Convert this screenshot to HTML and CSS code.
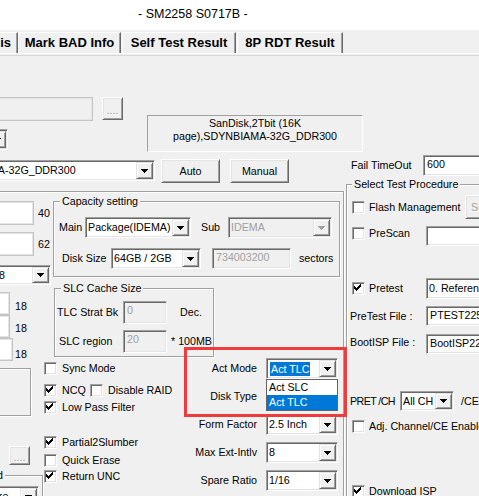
FILE: index.html
```html
<!DOCTYPE html>
<html lang="en">
<head>
<meta charset="utf-8">
<title>SM2258 S0717B</title>
<link rel="stylesheet" href="styles.css">
</head>
<body>
<div class="titlebar">- SM2258 S0717B -</div>
<div class="tabs">
  <div class="tab t1">is</div>
  <div class="tab t2">Mark BAD Info</div>
  <div class="tab t3">Self Test Result</div>
  <div class="tab t4">8P RDT Result</div>
</div>
<div class="panel">
  <div class="top">
    <div class="tl">
      <div class="row">
        <div class="edit lite dis e-path"></div>
        <div class="btn dis b-path">....</div>
      </div>
      <div class="combo c-stub"><span class="val"></span><span class="arr"><svg width="7" height="4" viewBox="0 0 7 4"><path d="M0 0h7v1h-1v1h-1v1h-1v1h-1v-1h-1v-1h-1v-1h-1z"/></svg></span></div>
    </div>
    <div class="info">SanDisk,2Tbit (16K<br>page),SDYNBIAMA-32G_DDR300</div>
  </div>
  <div class="row r3">
    <div class="combo c-chip"><span class="val">SDYNBIAMA-32G_DDR300</span><span class="arr"><svg width="7" height="4" viewBox="0 0 7 4"><path d="M0 0h7v1h-1v1h-1v1h-1v1h-1v-1h-1v-1h-1v-1h-1z"/></svg></span></div>
    <div class="btn b-auto">Auto</div>
    <div class="btn b-man">Manual</div>
    <div class="lbl l-fail">Fail TimeOut</div>
    <div class="edit e-fail">600</div>
  </div>
  <div class="bottom">
    <div class="biggroup">
      <div class="colL">
        <div class="row l-r1"><div class="edit lite e-40"></div><div class="lbl l-40">40</div></div>
        <div class="row l-r2"><div class="edit lite e-40"></div><div class="lbl l-40">62</div></div>
        <div class="combo c-8"><span class="val">8</span><span class="arr"><svg width="7" height="4" viewBox="0 0 7 4"><path d="M0 0h7v1h-1v1h-1v1h-1v1h-1v-1h-1v-1h-1v-1h-1z"/></svg></span></div>
        <div class="row l-r3"><div class="edit lite e-18"></div><div class="lbl l-18a">18</div></div>
        <div class="row"><div class="edit lite e-18"></div><div class="lbl l-18b">18</div></div>
        <div class="row"><div class="edit lite e-18w"></div><div class="lbl l-18c">18</div></div>
        <div class="grp f-box"></div>
        <div class="btn dis b-dots">....</div>
        <div class="grp g-low">
          <div class="gt gt-low">Speed</div>
          <div class="combo c-hw"><span class="val">Hardware</span><span class="arr"><svg width="7" height="4" viewBox="0 0 7 4"><path d="M0 0h7v1h-1v1h-1v1h-1v1h-1v-1h-1v-1h-1v-1h-1z"/></svg></span></div>
        </div>
      </div>
      <div class="colM">
        <div class="grp g-cap">
          <div class="gt">Capacity setting</div>
          <div class="row crow cap1">
            <div class="lbl l-main">Main</div>
            <div class="combo c-main"><span class="val">Package(IDEMA)</span><span class="arr"><svg width="7" height="4" viewBox="0 0 7 4"><path d="M0 0h7v1h-1v1h-1v1h-1v1h-1v-1h-1v-1h-1v-1h-1z"/></svg></span></div>
            <div class="lbl l-sub">Sub</div>
            <div class="combo dis c-sub"><span class="val">IDEMA</span><span class="arr"><svg width="7" height="4" viewBox="0 0 7 4"><path d="M0 0h7v1h-1v1h-1v1h-1v1h-1v-1h-1v-1h-1v-1h-1z"/></svg></span></div>
          </div>
          <div class="row crow cap2">
            <div class="lbl l-disk">Disk Size</div>
            <div class="combo c-disk"><span class="val">64GB / 2GB</span><span class="arr"><svg width="7" height="4" viewBox="0 0 7 4"><path d="M0 0h7v1h-1v1h-1v1h-1v1h-1v-1h-1v-1h-1v-1h-1z"/></svg></span></div>
            <div class="edit dis e-sect">734003200</div>
            <div class="lbl l-sect">sectors</div>
          </div>
        </div>
        <div class="grp g-slc">
          <div class="gt">SLC Cache Size</div>
          <div class="row srow slc1">
            <div class="lbl l-tlc">TLC Strat Bk</div>
            <div class="edit dis e-slc">0</div>
            <div class="lbl l-dec">Dec.</div>
          </div>
          <div class="row srow slc2">
            <div class="lbl l-slcr">SLC region</div>
            <div class="edit dis e-slc">20</div>
            <div class="lbl l-mb">* 100MB</div>
          </div>
        </div>
        <div class="lower">
          <div class="checks">
            <div class="chk k-sync"><span class="box"></span><span class="cap">Sync Mode</span></div>
            <div class="krow">
              <div class="chk k-ncq"><span class="box"><svg width="11" height="11" viewBox="0 0 11 11"><path d="M1 3h1v3H1zM2 4h1v3H2zM3 5h1v3H3zM4 4h1v3H4zM5 3h1v3H5zM6 2h1v3H6zM7 1h1v3H7z"/></svg></span><span class="cap">NCQ</span></div>
              <div class="chk"><span class="box"></span><span class="cap">Disable RAID</span></div>
            </div>
            <div class="chk k-lpf"><span class="box"><svg width="11" height="11" viewBox="0 0 11 11"><path d="M1 3h1v3H1zM2 4h1v3H2zM3 5h1v3H3zM4 4h1v3H4zM5 3h1v3H5zM6 2h1v3H6zM7 1h1v3H7z"/></svg></span><span class="cap">Low Pass Filter</span></div>
            <div class="chk k-p2s"><span class="box"><svg width="11" height="11" viewBox="0 0 11 11"><path d="M1 3h1v3H1zM2 4h1v3H2zM3 5h1v3H3zM4 4h1v3H4zM5 3h1v3H5zM6 2h1v3H6zM7 1h1v3H7z"/></svg></span><span class="cap">Partial2Slumber</span></div>
            <div class="chk k-qe"><span class="box"></span><span class="cap">Quick Erase</span></div>
            <div class="chk k-unc"><span class="box"><svg width="11" height="11" viewBox="0 0 11 11"><path d="M1 3h1v3H1zM2 4h1v3H2zM3 5h1v3H3zM4 4h1v3H4zM5 3h1v3H5zM6 2h1v3H6zM7 1h1v3H7z"/></svg></span><span class="cap">Return UNC</span></div>
          </div>
          <div class="acts">
            <div class="albl">Act Mode</div>
            <div class="combo"><span class="val"><span class="hl">Act TLC</span></span><span class="arr"><svg width="7" height="4" viewBox="0 0 7 4"><path d="M0 0h7v1h-1v1h-1v1h-1v1h-1v-1h-1v-1h-1v-1h-1z"/></svg></span></div>
            <div class="albl">Disk Type</div>
            <div class="combo"><span class="val"></span><span class="arr"><svg width="7" height="4" viewBox="0 0 7 4"><path d="M0 0h7v1h-1v1h-1v1h-1v1h-1v-1h-1v-1h-1v-1h-1z"/></svg></span></div>
            <div class="albl">Form Factor</div>
            <div class="combo"><span class="val">2.5 Inch</span><span class="arr"><svg width="7" height="4" viewBox="0 0 7 4"><path d="M0 0h7v1h-1v1h-1v1h-1v1h-1v-1h-1v-1h-1v-1h-1z"/></svg></span></div>
            <div class="albl">Max Ext-Intlv</div>
            <div class="combo"><span class="val">8</span><span class="arr"><svg width="7" height="4" viewBox="0 0 7 4"><path d="M0 0h7v1h-1v1h-1v1h-1v1h-1v-1h-1v-1h-1v-1h-1z"/></svg></span></div>
            <div class="albl">Spare Ratio</div>
            <div class="combo"><span class="val">1/16</span><span class="arr"><svg width="7" height="4" viewBox="0 0 7 4"><path d="M0 0h7v1h-1v1h-1v1h-1v1h-1v-1h-1v-1h-1v-1h-1z"/></svg></span></div>
          </div>
        </div>
      </div>
    </div>
    <div class="grp selgroup">
      <div class="gt gt-sel">Select Test Procedure</div>
      <div class="srow2 s-flash">
        <div class="chk"><span class="box"></span><span class="cap cap-w96">Flash Management</span></div>
        <div class="btn dis b-set">Setup</div>
      </div>
      <div class="srow2 s-scan">
        <div class="chk k-scan"><span class="box"></span><span class="cap cap-w57">PreScan</span></div>
        <div class="edit e-side"></div>
      </div>
      <div class="srow2 s-pt">
        <div class="chk"><span class="box"><svg width="11" height="11" viewBox="0 0 11 11"><path d="M1 3h1v3H1zM2 4h1v3H2zM3 5h1v3H3zM4 4h1v3H4zM5 3h1v3H5zM6 2h1v3H6zM7 1h1v3H7z"/></svg></span><span class="cap cap-w57">Pretest</span></div>
        <div class="combo c-ref"><span class="val">0. Reference Test</span><span class="arr"><svg width="7" height="4" viewBox="0 0 7 4"><path d="M0 0h7v1h-1v1h-1v1h-1v1h-1v-1h-1v-1h-1v-1h-1z"/></svg></span></div>
      </div>
      <div class="srow2 s-ptf">
        <div class="lbl l-file">PreTest File :</div>
        <div class="edit e-side">PTEST2258.bin</div>
      </div>
      <div class="srow2 s-boot">
        <div class="lbl l-file l-up">BootISP File :</div>
        <div class="edit e-side">BootISP2258.bin</div>
      </div>
      <div class="srow2 s-pret">
        <div class="lbl l-pret">PRET /CH</div>
        <div class="combo c-allch"><span class="val">All CH</span><span class="arr"><svg width="7" height="4" viewBox="0 0 7 4"><path d="M0 0h7v1h-1v1h-1v1h-1v1h-1v-1h-1v-1h-1v-1h-1z"/></svg></span></div>
        <div class="lbl l-ce">/CE</div>
      </div>
      <div class="chk s-adj"><span class="box"></span><span class="cap">Adj. Channel/CE Enable</span></div>
      <div class="chk s-dl"><span class="box"><svg width="11" height="11" viewBox="0 0 11 11"><path d="M1 3h1v3H1zM2 4h1v3H2zM3 5h1v3H3zM4 4h1v3H4zM5 3h1v3H5zM6 2h1v3H6zM7 1h1v3H7z"/></svg></span><span class="cap">Download ISP</span></div>
    </div>
  </div>
</div>
<div class="redbox"></div>
<div class="droplist"><div class="opt">Act SLC</div><div class="opt sel">Act TLC</div></div>
</body>
</html>
```
FILE: styles.css
```css
* { box-sizing: border-box; }
html, body { margin: 0; padding: 0; overflow: hidden; }
body {
  position: relative;
  width: 479px;
  height: 496px;
  background: #f0f0f0;
  color: #000;
  font-family: "Liberation Sans", Arial, sans-serif;
  font-size: 10.7px;
  line-height: 13px;
}

/* title bar */
.titlebar {
  height: 30px;
  background: #fff;
  padding: 7px 0 0 138px;
  font-size: 12.5px;
  line-height: 14px;
  white-space: nowrap;
}

/* tabs */
.tabs { display: flex; height: 23px; padding-top: 2px; }
.tab {
  flex-shrink: 0;
  height: 21px;
  border-top: 1px solid #fff;
  border-left: 1px solid #fff;
  border-right: 1px solid #696969;
  box-shadow: inset -1px 0 #a0a0a0;
  font-weight: bold;
  font-size: 13px;
  line-height: 20px;
  text-align: center;
  white-space: nowrap;
}
.t1 { width: 18px; border-left: 0; text-align: right; padding-right: 6px; }
.t2 { width: 103px; margin-right: 1px; }
.t3 { width: 114px; margin-right: 1px; }
.t4 { width: 106px; }

.panel { border-top: 1px solid #fff; }
.panel::before { content: ""; display: block; height: 1px; margin-top: 1px; background: #d8d8d8; }

/* generic controls */
.row { display: flex; align-items: flex-start; }
.lbl { flex-shrink: 0; white-space: nowrap; }

.edit {
  flex-shrink: 0;
  display: flex;
  align-items: flex-start;
  padding: 2px 3px 0;
  background: #fff;
  border: 1px solid;
  border-color: #a0a0a0 #fff #fff #a0a0a0;
  box-shadow: inset 1px 1px #696969, inset -1px -1px #e3e3e3;
  white-space: nowrap;
  overflow: hidden;
}
.edit.dis { background: #f0f0f0; color: #a0a0a0; }
.edit.lite { border-color: #c4c4c4; box-shadow: inset 0 0 0 1px #e4e4e4; }

.combo {
  flex-shrink: 0;
  display: flex;
  align-items: center;
  height: 21px;
  padding: 1px;
  background: #fff;
  border: 1px solid;
  border-color: #a0a0a0 #fff #fff #a0a0a0;
  box-shadow: inset 1px 1px #696969, inset -1px -1px #e3e3e3;
}
.combo .val { flex: 1; min-width: 0; padding-left: 1px; white-space: nowrap; overflow: hidden; }
.combo .arr {
  flex-shrink: 0;
  width: 17px;
  align-self: stretch;
  display: flex;
  align-items: center;
  justify-content: center;
  background: #f0f0f0;
  border: 1px solid;
  border-color: #e3e3e3 #696969 #696969 #e3e3e3;
  box-shadow: inset 1px 1px #fff, inset -1px -1px #a0a0a0;
}
.arr svg { display: block; fill: #000; }
.combo.dis { background: #f0f0f0; color: #a0a0a0; }
.combo.dis .arr svg { fill: #a0a0a0; }
.hl { display: inline-block; margin-left: 1px; padding: 0 1px; line-height: 14px; background: #0078d7; color: #fff; }

.btn {
  flex-shrink: 0;
  display: flex;
  align-items: center;
  justify-content: center;
  background: #f0f0f0;
  border: 1px solid;
  border-color: #fff #696969 #696969 #fff;
  box-shadow: inset 1px 1px #e3e3e3, inset -1px -1px #a0a0a0;
  white-space: nowrap;
  overflow: hidden;
}
.btn.dis { color: #a0a0a0; text-shadow: 1px 1px #fff; }

.chk { flex-shrink: 0; display: flex; align-items: center; height: 13px; white-space: nowrap; }
.box {
  flex-shrink: 0;
  width: 13px;
  height: 13px;
  background: #fff;
  border: 1px solid;
  border-color: #a0a0a0 #fff #fff #a0a0a0;
  box-shadow: inset 1px 1px #696969, inset -1px -1px #e3e3e3;
}
.box svg { display: block; fill: #000; }
.chk .cap { margin-left: 5px; }

.grp { flex-shrink: 0; border: 1px solid #a0a0a0; box-shadow: inset 1px 1px #fff, 1px 1px #fff; }
.gt { width: max-content; margin: -7px 0 0 6px; padding: 0 2px; background: #f0f0f0; white-space: nowrap; }

/* top area */
.top { display: flex; height: 96px; }
.tl { flex-shrink: 0; width: 147px; padding-top: 41px; }
.e-path { width: 103px; height: 24px; margin-left: -10px; }
.b-path { width: 21px; height: 23px; margin-left: 9px; padding-top: 3px; }
.c-stub { width: 68px; margin: 8px 0 0 -60px; }
.info {
  flex-shrink: 0;
  width: 216px;
  height: 37px;
  margin-top: 59px;
  padding-top: 1px;
  border: 1px solid;
  border-color: #a0a0a0 #fff #fff #a0a0a0;
  text-align: center;
  white-space: nowrap;
}

.r3 { height: 32px; }
.c-chip { width: 216px; margin: 8px 0 0 -61px; }
.b-auto { width: 59px; height: 24px; margin: 7px 0 0 6px; }
.b-man { width: 59px; height: 24px; margin: 7px 0 0 10px; }
.l-fail { width: 72px; margin: 7px 0 0 62px; }
.e-fail { width: 60px; height: 21px; margin-top: 3px; }

/* bottom area */
.bottom { display: flex; align-items: flex-start; }
.biggroup {
  flex-shrink: 0;
  display: flex;
  width: 344px;
  height: 310px;
  margin-top: 7px;
  border: 1px solid #a0a0a0;
  border-left: 0;
  border-bottom: 0;
  box-shadow: inset 0 1px #fff, 1px 0 #fff;
}
.colL { flex-shrink: 0; width: 43px; }
.colM { flex-shrink: 0; width: 300px; }

.l-r1 { margin-top: 9px; }
.l-r2 { margin-top: 7px; }
.e-40 { width: 44px; height: 24px; margin-left: -10px; }
.l-40 { margin: 6px 0 0 4px; }
.c-8 { width: 55px; height: 20px; margin: 9px 0 0 -4px; }
.l-r3 { margin-top: 7px; }
.e-18 { width: 20px; height: 23px; margin-left: -10px; }
.e-18w { width: 23px; height: 23px; margin-left: -10px; }
.l-18a { margin: 8px 0 0 5px; }
.l-18b { margin: 7px 0 0 5px; }
.l-18c { margin: 10px 0 0 2px; }
.f-box { width: 41px; height: 48px; margin: 7px 0 0 -10px; }
.b-dots { width: 21px; height: 19px; margin: 30px 0 0 9px; padding-top: 3px; }
.g-low { width: 83px; height: 60px; margin: 10px 0 0 -40px; }
.gt-low { width: 40px; margin-left: 4px; text-align: right; }
.c-hw { width: 80px; margin: 4px 0 0 -2px; }

.g-cap { width: 287px; height: 76px; margin: 9px 0 0 10px; }
.crow { align-items: center; height: 21px; }
.cap1 { margin-top: 9px; }
.cap2 { margin-top: 10px; }
.l-main { width: 26px; margin-left: 5px; }
.c-main { width: 106px; }
.l-sub { width: 27px; margin-left: 10px; }
.c-sub { width: 104px; }
.l-disk { width: 49px; margin-left: 8px; }
.c-disk { width: 90px; }
.e-sect { width: 79px; height: 21px; margin-left: 11px; }
.l-sect { margin-left: 8px; }

.g-slc { width: 160px; height: 69px; margin: 11px 0 0 11px; }
.srow { align-items: center; height: 23px; margin-top: 6px; }
.l-tlc { width: 66px; margin-left: 2px; }
.l-slcr { width: 64px; margin-left: 4px; }
.e-slc { width: 44px; height: 23px; }
.l-dec { margin-left: 13px; }
.l-mb { margin-left: 4px; }

.lower { display: flex; align-items: flex-start; }
.checks { flex-shrink: 0; width: 147px; }
.k-sync { margin: 5px 0 0 1px; }
.krow { display: flex; margin: 9px 0 0 1px; }
.k-ncq { width: 46px; }
.k-lpf { margin: 4px 0 0 1px; }
.k-p2s { margin: 22px 0 0 1px; }
.k-qe { margin: 5px 0 0 1px; }
.k-unc { margin: 3px 0 0 1px; }

.acts {
  flex-shrink: 0;
  display: grid;
  grid-template-columns: 67px 72px;
  grid-auto-rows: 21px;
  column-gap: 9px;
  row-gap: 7px;
  align-items: center;
  margin-top: 1px;
}
.albl { text-align: right; white-space: nowrap; }

/* select test procedure */
.selgroup { width: 140px; height: 320px; margin-left: 2px; border-right: 0; border-bottom: 0; }
.gt-sel { margin-left: 5px; }
.srow2 { display: flex; align-items: center; }
.s-flash { height: 24px; margin: 4px 0 0 5px; }
.s-flash .cap, .s-scan .cap, .s-pt .cap, .s-adj .cap, .s-dl .cap { margin-left: 4px; }
.cap-w96 { width: 96px; }
.cap-w57 { width: 57px; }
.b-set { width: 40px; height: 24px; justify-content: flex-start; padding-left: 5px; }
.s-scan { align-items: flex-start; height: 20px; margin: 7px 0 0 5px; }
.k-scan { margin-top: 1px; }
.e-side { width: 60px; height: 20px; }
.s-pt { height: 21px; margin: 32px 0 0 5px; }
.c-ref { width: 100px; }
.s-ptf { height: 20px; margin: 7px 0 0 3px; }
.s-boot { height: 20px; margin: 8px 0 0 3px; }
.l-file { width: 76px; }
.l-up { margin-bottom: 4px; }
.s-pret { height: 20px; margin: 37px 0 0 3px; }
.l-pret { width: 50px; letter-spacing: -0.6px; }
.c-allch { width: 54px; height: 20px; }
.l-ce { margin-left: 7px; }
.s-adj { margin: 9px 0 0 5px; }
.s-dl { margin: 52px 0 0 5px; }

/* overlays: annotation and open dropdown */
.redbox {
  position: absolute;
  left: 184px;
  top: 347px;
  width: 163px;
  height: 70px;
  border: 3px solid #ee3b3b;
}
.droplist {
  position: absolute;
  left: 266px;
  top: 379px;
  width: 72px;
  height: 32px;
  background: #fff;
  border: 1px solid #646464;
}
.opt { height: 15px; line-height: 15px; padding-left: 2px; white-space: nowrap; }
.opt.sel { background: #0078d7; color: #fff; }
```
